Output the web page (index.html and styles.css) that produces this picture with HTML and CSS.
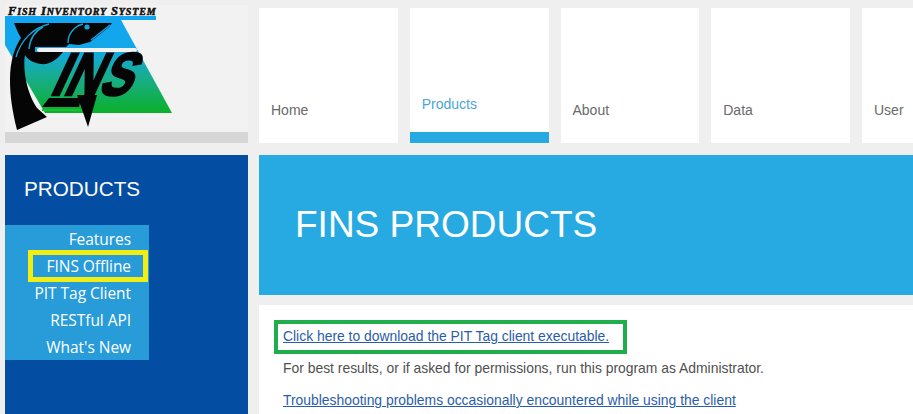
FILE: index.html
```html
<!DOCTYPE html>
<html lang="en">
<head>
<meta charset="utf-8">
<title>FINS Products</title>
<link rel="stylesheet" href="styles.css">
</head>
<body>
<div class="page">
  <header class="logo-box">
    <svg class="logo" width="243" height="127" viewBox="0 0 243 127" aria-label="FINS logo">
      <defs>
        <linearGradient id="bg" x1="0" y1="0" x2="0" y2="1">
          <stop offset="0" stop-color="#12a5f2"/>
          <stop offset="0.32" stop-color="#12a8e8"/>
          <stop offset="0.62" stop-color="#17ad8c"/>
          <stop offset="1" stop-color="#0cb02a"/>
        </linearGradient>
      </defs>
      <text class="logo-title" x="3" y="10">F<tspan class="sc">ISH</tspan> I<tspan class="sc">NVENTORY</tspan> S<tspan class="sc">YSTEM</tspan></text>
      <rect x="0" y="11" width="151" height="4" fill="#12a5f2"/>
      <polygon points="0,15 116,15 167,108 40,108 0,40" fill="url(#bg)"/>
      <path d="M9,18 L107,18 L104,22 L85,37 L74,40 L64,39 L61,42 L30,42 L30,47 L58,47 C52,55 44,60 36,59 C28,58 22,54 20,50 C18,60 20,85 32,103 L42,112 L12,125 C7,105 5,90 5,75 C5,55 10,42 16,33 C13,28 11,23 9,18 Z" fill="#050505"/>
      <path class="logo-line" d="M44,19 C28,23 16,35 11,52"/>
      <path class="logo-line" d="M38,22 C30,26 25,34 24,44"/>
      <path class="logo-line" d="M78,19 C70,21 63,28 63,38"/>
      <path class="logo-line" d="M105,20 L86,35"/>
      <circle cx="82" cy="22" r="2.6" fill="#15a5d8"/>
      <rect x="32" y="43" width="100" height="4" rx="2" fill="#f2f2f2"/>
      <text class="logo-ins" transform="translate(44,90) skewX(-25) scale(.8,1)">INS</text>
      <polygon points="44,93 76,93 74,102 37,102" fill="#050505"/>
      <path d="M37,105 L79,105" stroke="#19c030" stroke-width="2"/>
      <polygon points="72,90 92,90 83,122" fill="#050505"/>
    </svg>
    <div class="logo-bar"></div>
  </header>
  <nav class="tabs">
    <a class="tab">Home</a>
    <a class="tab tab-active">Products</a>
    <a class="tab">About</a>
    <a class="tab">Data</a>
    <a class="tab">User</a>
  </nav>
  <aside class="sidebar">
    <h2 class="side-title">PRODUCTS</h2>
    <ul class="side-menu">
      <li class="side-item">Features</li>
      <li class="side-item side-marked">FINS Offline</li>
      <li class="side-item">PIT Tag Client</li>
      <li class="side-item">RESTful API</li>
      <li class="side-item">What's New</li>
    </ul>
  </aside>
  <main class="main">
    <div class="banner"><h1 class="banner-title">FINS PRODUCTS</h1></div>
    <section class="content">
      <p class="marked-link"><a class="link">Click here to download the PIT Tag client executable.</a></p>
      <p class="text">For best results, or if asked for permissions, run this program as Administrator.</p>
      <p class="text"><a class="link">Troubleshooting problems occasionally encountered while using the client</a></p>
    </section>
  </main>
</div>
</body>
</html>
```
FILE: styles.css
```css
html, body {
  margin: 0;
  height: 414px;
  overflow: hidden;
  background: #efefef;
}
body {
  font-family: "Liberation Sans", Arial, sans-serif;
  width: 913px;
}
.page {
  display: grid;
  grid-template-columns: 243px 654px;
  grid-template-rows: 138px 259px;
  column-gap: 11px;
  row-gap: 12px;
  padding: 5px 0 0 5px;
}
.logo-box {
  background: #f2f2f2;
  display: flex;
  flex-direction: column;
  overflow: hidden;
}
.logo { display: block; flex: none; }
.logo-line {
  fill: none;
  stroke: #15a5d8;
  stroke-width: 1.4;
}
.logo-title {
  font-family: "Liberation Serif", serif;
  font-weight: 700;
  font-style: italic;
  font-size: 12.5px;
  fill: #111;
  stroke: #111;
  stroke-width: .5px;
  letter-spacing: .85px;
}
.sc { font-size: 10px; }
.logo-ins {
  font-family: "Liberation Sans", sans-serif;
  font-weight: 700;
  font-size: 60px;
  fill: #050505;
  stroke: #050505;
  stroke-width: 2.5px;
}
.logo-bar { height: 11px; background: #d6d6d6; }
.tabs {
  display: flex;
  gap: 12px;
  padding-top: 3px;
  overflow: hidden;
}
.tab {
  flex: 0 0 138.75px;
  box-sizing: border-box;
  background: #fff;
  padding: 94px 0 0 12px;
  font-size: 14px;
  line-height: 16px;
  color: #6a6a6a;
}
.tab-active {
  padding-top: 88px;
  color: #4aa5d8;
  border-bottom: 11px solid #27aae2;
}
.sidebar { background: #034ea2; }
.side-title {
  margin: 0;
  padding: 22px 0 0 19px;
  height: 48px;
  font-weight: 400;
  font-size: 20.7px;
  line-height: 24px;
  color: #fff;
}
.side-menu {
  list-style: none;
  margin: 0;
  padding: 0;
  width: 144px;
  background: #289cd9;
}
.side-item {
  height: 27px;
  line-height: 29px;
  padding-right: 18px;
  text-align: right;
  font-family: "Open Sans", sans-serif;
  font-size: 15.5px;
  letter-spacing: -.05px;
  color: #fff;
}
.side-marked {
  position: relative;
}
.side-marked::after {
  content: "";
  position: absolute;
  left: 23px;
  right: 1px;
  top: -2px;
  bottom: -3px;
  border: 5px solid #f2ee14;
}
.banner {
  height: 140px;
  background: #27aae2;
  display: flex;
  align-items: center;
  padding-left: 36px;
}
.banner-title {
  margin: 0;
  font-weight: 400;
  font-size: 37px;
  color: #fff;
}
.content {
  margin-top: 10px;
  background: #fff;
  height: 94px;
  padding: 15px 0 0 15px;
}
.marked-link {
  margin: 0;
  width: 353px;
  height: 34px;
  box-sizing: border-box;
  border: 4px solid #1fae4b;
  padding-left: 5px;
  line-height: 24px;
  font-size: 13.9px;
}
.text {
  margin: 0;
  padding-left: 9px;
  height: 27px;
  line-height: 29px;
  font-size: 13.9px;
  color: #505050;
}
.text + .text {
  margin-top: 5px;
}
.link {
  color: #2a5da8;
  text-decoration: underline;
}
```
